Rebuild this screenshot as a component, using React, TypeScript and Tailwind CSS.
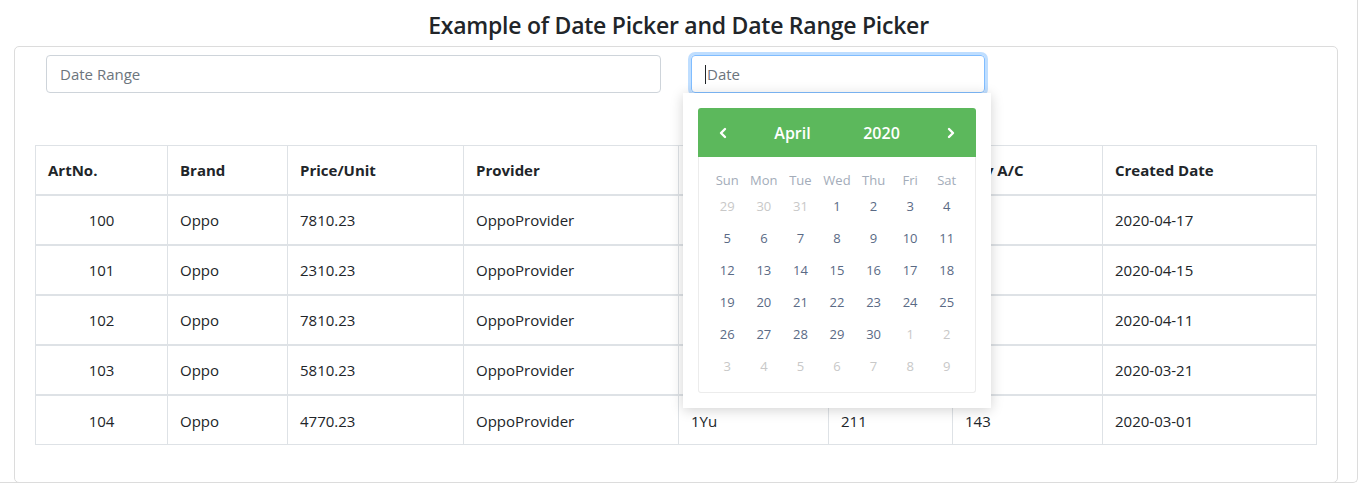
import React from 'react'

interface Product {
  artNo: number
  brand: string
  price: string
  provider: string
  warranty: string
  stock: string
  buyAc: string
  created: string
}

const products: Product[] = [
  { artNo: 100, brand: 'Oppo', price: '7810.23', provider: 'OppoProvider', warranty: '1Yu', stock: '211', buyAc: '143', created: '2020-04-17' },
  { artNo: 101, brand: 'Oppo', price: '2310.23', provider: 'OppoProvider', warranty: '1Yu', stock: '211', buyAc: '143', created: '2020-04-15' },
  { artNo: 102, brand: 'Oppo', price: '7810.23', provider: 'OppoProvider', warranty: '1Yu', stock: '211', buyAc: '143', created: '2020-04-11' },
  { artNo: 103, brand: 'Oppo', price: '5810.23', provider: 'OppoProvider', warranty: '1Yu', stock: '211', buyAc: '143', created: '2020-03-21' },
  { artNo: 104, brand: 'Oppo', price: '4770.23', provider: 'OppoProvider', warranty: '1Yu', stock: '211', buyAc: '143', created: '2020-03-01' },
]

const columns = [
  { label: 'ArtNo.', width: 132 },
  { label: 'Brand', width: 120 },
  { label: 'Price/Unit', width: 176 },
  { label: 'Provider', width: 215 },
  { label: 'Warranty', width: 150 },
  { label: 'Stock', width: 124 },
  { label: 'Buy A/C', width: 150 },
  { label: 'Created Date', width: 214 },
]

const weekDays = ['Sun', 'Mon', 'Tue', 'Wed', 'Thu', 'Fri', 'Sat']

// April 2020 grid, leading and trailing days from the neighbour months
const calendarDays: { day: number; current: boolean }[] = [
  ...[29, 30, 31].map((d) => ({ day: d, current: false })),
  ...Array.from({ length: 30 }, (_, i) => ({ day: i + 1, current: true })),
  ...Array.from({ length: 9 }, (_, i) => ({ day: i + 1, current: false })),
]

function Chevron({ dir }: { dir: 'left' | 'right' }) {
  return (
    <svg width="10" height="12" viewBox="0 0 10 12" fill="none">
      <polyline
        points={dir === 'left' ? '7,2 3,6 7,10' : '3,2 7,6 3,10'}
        stroke="white"
        strokeWidth={2.4}
        strokeLinecap="round"
        strokeLinejoin="round"
      />
    </svg>
  )
}

function DatePickerPopup() {
  return (
    <div className="absolute left-[-8px] top-[38px] w-[308px] bg-white p-[15px] shadow-[0_2px_12px_rgba(0,0,0,0.18)] z-10">
      <div className="h-[49px] bg-[#5cb85c] rounded-t-[3px] flex items-center text-white text-[16px] font-semibold">
        <div className="w-[50px] flex justify-center">
          <Chevron dir="left" />
        </div>
        <div className="flex-1 text-center">April</div>
        <div className="flex-1 text-center">2020</div>
        <div className="w-[50px] flex justify-center">
          <Chevron dir="right" />
        </div>
      </div>
      <div className="border border-t-0 border-[#ececec] rounded-b-[3px] px-[10px] pt-[14px] pb-[9px]">
        <div className="grid grid-cols-7 h-[20px] items-center text-[13px] text-[#a3acb9]">
          {weekDays.map((d) => (
            <div key={d} className="text-center">{d}</div>
          ))}
        </div>
        <div className="grid grid-cols-7">
          {calendarDays.map((c, i) => (
            <div
              key={i}
              className={`h-[32px] flex items-center justify-center text-[13px] ${
                c.current ? 'text-[#5a6a85]' : 'text-[#c8c8c8]'
              }`}
            >
              {c.day}
            </div>
          ))}
        </div>
      </div>
    </div>
  )
}

export default function App() {
  return (
    <div className="font-['Open_Sans',sans-serif] text-[#212529] bg-white">
      <div className="w-[1358px] h-[483px] border-r border-b border-[#dcdcdc] rounded-br-[5px]">
        <h1 className="h-[46px] pt-[11px] text-center text-[23px] font-semibold leading-[28px] tracking-[-0.25px]">
          Example of Date Picker and Date Range Picker
        </h1>

        <div className="ml-[14px] w-[1324px] h-[437px] border border-[#dcdcdc] rounded-[5px]">
          {/* Inputs */}
          <div className="flex gap-[30px] pl-[31px] pt-[8px]">
            <input
              type="text"
              placeholder="Date Range"
              className="w-[615px] h-[38px] px-[13px] rounded-[4px] border border-[#ced4da] text-[15px] placeholder:text-[#6c757d] outline-none"
            />
            <div className="relative">
              <div className="w-[294px] h-[38px] px-[13px] rounded-[4px] border border-[#80bdff] shadow-[0_0_0_3px_rgba(0,123,255,0.25)] flex items-center text-[15px] text-[#6c757d]">
                <span className="w-px h-[19px] bg-[#212529] mr-[1px]" />
                Date
              </div>
              <DatePickerPopup />
            </div>
          </div>

          {/* Products table */}
          <table className="ml-[20px] mt-[52px] w-[1281px] table-fixed border-collapse text-[15px]">
            <colgroup>
              {columns.map((c) => (
                <col key={c.label} style={{ width: c.width }} />
              ))}
            </colgroup>
            <thead>
              <tr>
                {columns.map((c) => (
                  <th
                    key={c.label}
                    className="h-[49px] px-[12px] text-left font-bold border border-b-2 border-[#dee2e6]"
                  >
                    {c.label}
                  </th>
                ))}
              </tr>
            </thead>
            <tbody>
              {products.map((p) => (
                <tr key={p.artNo}>
                  <td className="h-[50px] px-[12px] pt-[2px] text-center border border-t-2 border-[#dee2e6]">{p.artNo}</td>
                  <td className="px-[12px] pt-[2px] border border-t-2 border-[#dee2e6]">{p.brand}</td>
                  <td className="px-[12px] pt-[2px] border border-t-2 border-[#dee2e6]">{p.price}</td>
                  <td className="px-[12px] pt-[2px] border border-t-2 border-[#dee2e6]">{p.provider}</td>
                  <td className="px-[12px] pt-[2px] border border-t-2 border-[#dee2e6]">{p.warranty}</td>
                  <td className="px-[12px] pt-[2px] border border-t-2 border-[#dee2e6]">{p.stock}</td>
                  <td className="px-[12px] pt-[2px] border border-t-2 border-[#dee2e6]">{p.buyAc}</td>
                  <td className="px-[12px] pt-[2px] border border-t-2 border-[#dee2e6]">{p.created}</td>
                </tr>
              ))}
            </tbody>
          </table>
        </div>
      </div>
    </div>
  )
}
